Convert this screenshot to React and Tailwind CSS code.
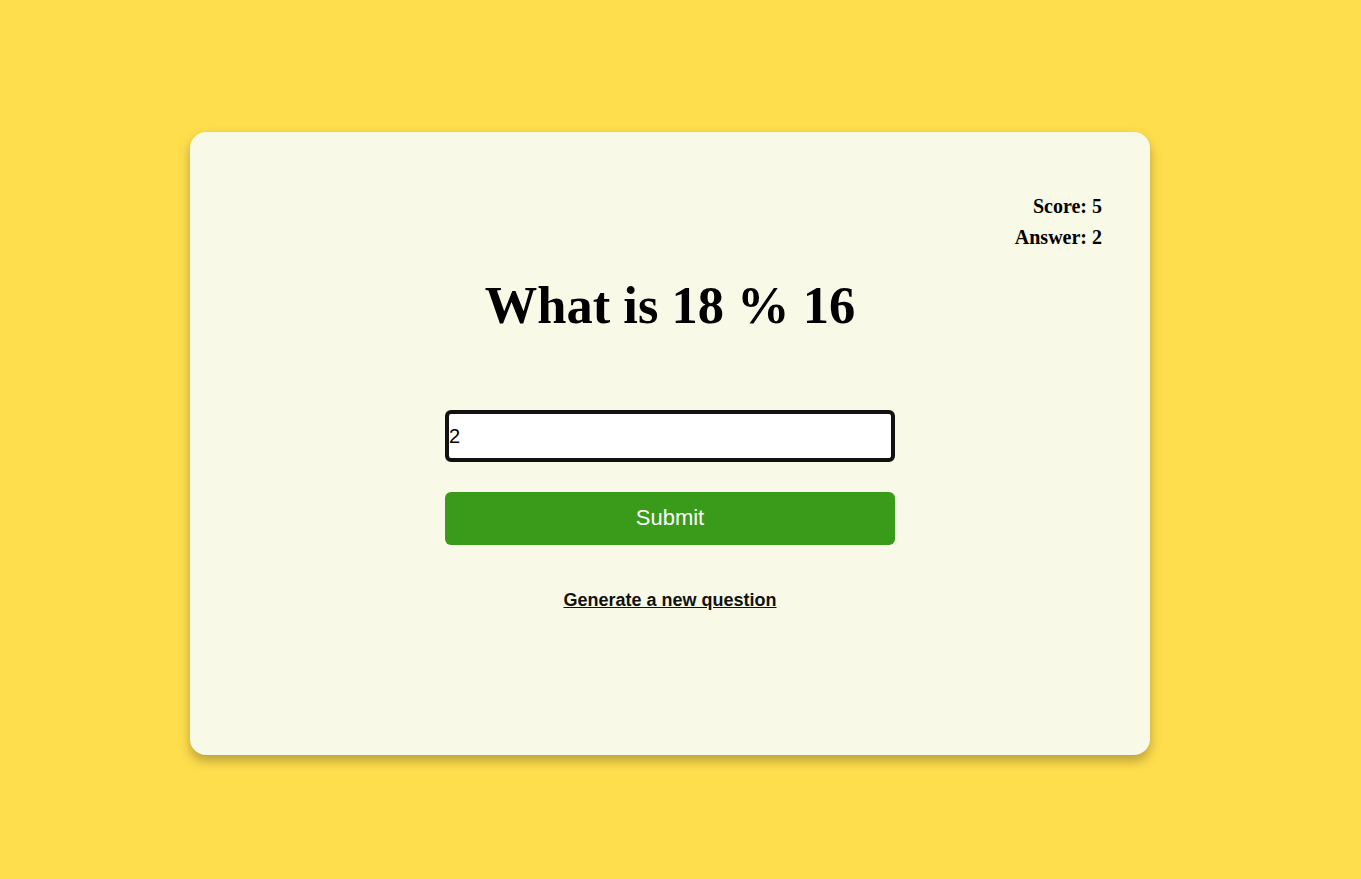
export default function App() {
  return (
    <div className="min-h-screen w-full bg-[#ffde4d] pt-[132px] pb-[124px]">
      <div className="ml-[190px] w-[960px] h-[623px] rounded-[16px] bg-[#f8f9e6] shadow-[0_6px_12px_rgba(0,0,0,0.28)] flex flex-col pt-[59px]">
        <div className="pr-[48px] flex flex-col items-end font-['Liberation_Serif',serif] font-bold text-[20px] leading-[31px] text-black">
          <div>Score: 5</div>
          <div>Answer: 2</div>
        </div>

        <h1 className="mt-[22px] text-center font-['Liberation_Serif',serif] font-bold text-[52.5px] leading-[60px] text-black">
          What is 18 % 16
        </h1>

        <div className="mt-[75px] flex flex-col items-center">
          <input
            type="text"
            defaultValue="2"
            className="w-[450px] h-[52px] border-[4px] border-[#111] rounded-[6px] bg-white px-0 font-['Liberation_Sans',Arial,sans-serif] text-[20px] text-black outline-none"
          />
          <button
            type="button"
            className="mt-[30px] w-[450px] h-[53px] pb-[2px] rounded-[6px] bg-[#3a9b1b] text-white font-['Liberation_Sans',Arial,sans-serif] text-[22px]"
          >
            Submit
          </button>
          <a
            href="#"
            className="mt-[43px] font-['Liberation_Sans',Arial,sans-serif] font-bold text-[18px] leading-[24px] text-[#111] underline"
          >
            Generate a new question
          </a>
        </div>
      </div>
    </div>
  );
}
